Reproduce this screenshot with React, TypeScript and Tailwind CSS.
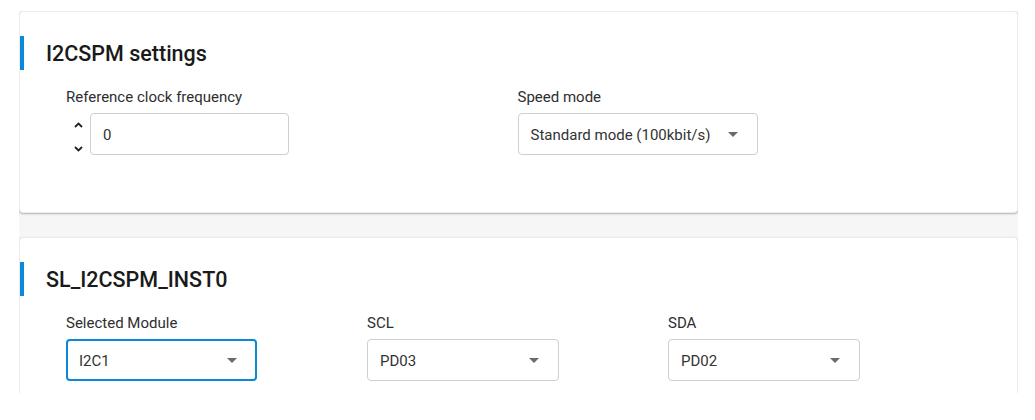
import { ReactNode } from "react";

const font = { fontFamily: "Roboto, 'Liberation Sans', sans-serif" };

function Caret() {
  return (
    <svg width="10" height="5" viewBox="0 0 10 5" className="shrink-0">
      <path d="M0 0h10L5 5z" fill="#6b6b6b" />
    </svg>
  );
}

function Field({ label, children }: { label: string; children: ReactNode }) {
  return (
    <div className="flex flex-col gap-[6px]">
      <span className="text-[15px] leading-5 text-[#2e2e2e]">{label}</span>
      {children}
    </div>
  );
}

function Select({
  value,
  width,
  focused = false,
}: {
  value: string;
  width: string;
  focused?: boolean;
}) {
  return (
    <div
      className={`${width} h-[42px] rounded-[4px] bg-white flex items-center justify-between text-[15px] text-[#333] ${
        focused
          ? "border-2 border-[#0a89d8] pl-[11px] pr-[18px]"
          : "border border-[#cfcfcf] pl-3 pr-[19px]"
      }`}
    >
      <span className="pt-[2px]">{value}</span>
      <Caret />
    </div>
  );
}

function Section({ title, children }: { title: string; children: ReactNode }) {
  return (
    <div className="bg-white border border-[#ebebeb] rounded-[4px] shadow-[0_1px_2px_rgba(0,0,0,0.28)] pt-6 shrink-0">
      <div className="flex items-center h-[34px]">
        <div className="w-1 h-[34px] bg-[#0a89d8]" />
        <h2 className="ml-[22px] mt-[3px] text-[21.5px] font-medium text-[#1a1a1a]">{title}</h2>
      </div>
      <div className="pl-[46px] pr-[48px] mt-[17px]">{children}</div>
    </div>
  );
}

export default function App() {
  return (
    <div className="w-[1035px] h-[420px] bg-white pt-[11px] pl-[19px]" style={font}>
      <div className="w-[999px] h-[382px] overflow-hidden bg-[#f6f6f6] flex flex-col gap-6">
        <div className="h-[202px] flex flex-col">
          <Section title="I2CSPM settings">
            <div className="grid grid-cols-2 pb-[57px]">
              <Field label="Reference clock frequency">
                <div className="flex">
                  <div className="w-6 h-[42px] flex flex-col items-center justify-between pt-[9px] pb-[3px]">
                    <svg width="9" height="6" viewBox="0 0 9 6">
                      <path d="M1 5l3.5-3.5L8 5" fill="none" stroke="#222" strokeWidth="1.8" />
                    </svg>
                    <svg width="9" height="6" viewBox="0 0 9 6">
                      <path d="M1 1l3.5 3.5L8 1" fill="none" stroke="#222" strokeWidth="1.8" />
                    </svg>
                  </div>
                  <div className="w-[199px] h-[42px] rounded-[4px] border border-[#cfcfcf] bg-white flex items-center pl-3 pt-[2px] text-[15px] text-[#333]">
                    0
                  </div>
                </div>
              </Field>
              <Field label="Speed mode">
                <Select value="Standard mode (100kbit/s)" width="w-[240px]" />
              </Field>
            </div>
          </Section>
        </div>
        <Section title="SL_I2CSPM_INST0">
          <div className="grid grid-cols-3 pb-14">
            <Field label="Selected Module">
              <Select value="I2C1" width="w-[191px]" focused />
            </Field>
            <Field label="SCL">
              <Select value="PD03" width="w-[192px]" />
            </Field>
            <Field label="SDA">
              <Select value="PD02" width="w-[192px]" />
            </Field>
          </div>
        </Section>
      </div>
    </div>
  );
}
